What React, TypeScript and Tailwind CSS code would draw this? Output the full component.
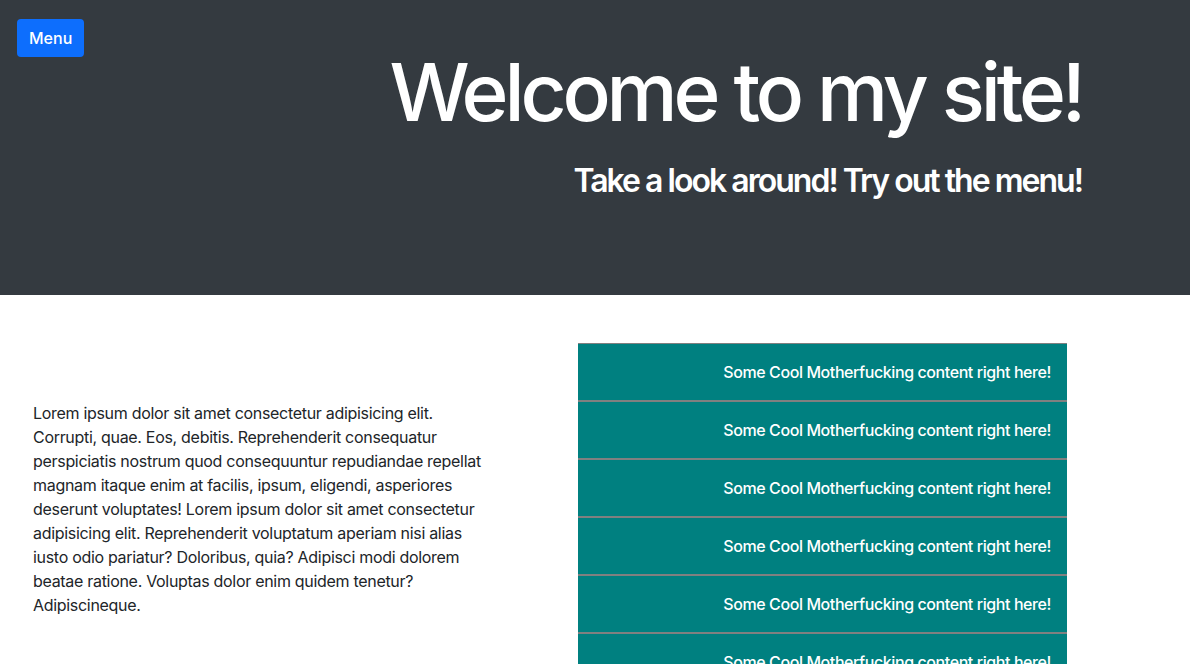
import React from "react";

const items = Array.from({ length: 8 }, () => "Some Cool Motherfucking content right here!");

export default function App() {
  return (
    <div className="min-h-screen bg-white font-['Inter','Noto_Sans',sans-serif] text-[#212529]">
      {/* Header */}
      <header className="relative h-[295px] bg-[#343a40] pt-[44px] pr-[108px] text-right text-white">
        <button className="absolute left-[17px] top-[19px] rounded-[4px] bg-[#0d6efd] px-3 py-[7px] text-base font-medium leading-6 text-white">
          Menu
        </button>
        <h1 className="text-[80px] font-medium leading-[96px] tracking-[-0.052em]">Welcome to my site!</h1>
        <h2 className="mt-[22px] text-[32px] font-semibold leading-[38px] tracking-[-0.062em]">
          Take a look around! Try out the menu!
        </h2>
      </header>

      {/* Content */}
      <main className="flex pt-12">
        <div className="w-[578px] pl-[33px] pt-[58px]">
          <p className="w-[462px] text-base leading-6 tracking-[-0.019em]">
            Lorem ipsum dolor sit amet consectetur adipisicing elit. Corrupti, quae. Eos, debitis. Reprehenderit
            consequatur perspiciatis nostrum quod consequuntur repudiandae repellat magnam itaque enim at facilis,
            ipsum, eligendi, asperiores deserunt voluptates! Lorem ipsum dolor sit amet consectetur adipisicing elit.
            Reprehenderit voluptatum aperiam nisi alias iusto odio pariatur? Doloribus, quia? Adipisci modi dolorem
            beatae ratione. Voluptas dolor enim quidem tenetur? Adipiscineque.
          </p>
        </div>
        <ul className="w-[489px]">
          {items.map((text, i) => (
            <li
              key={i}
              className="border-y border-[#808080] bg-[#008080] py-4 pr-4 text-right text-base font-medium leading-6 tracking-[-0.026em] text-white"
            >
              {text}
            </li>
          ))}
        </ul>
      </main>
    </div>
  );
}
